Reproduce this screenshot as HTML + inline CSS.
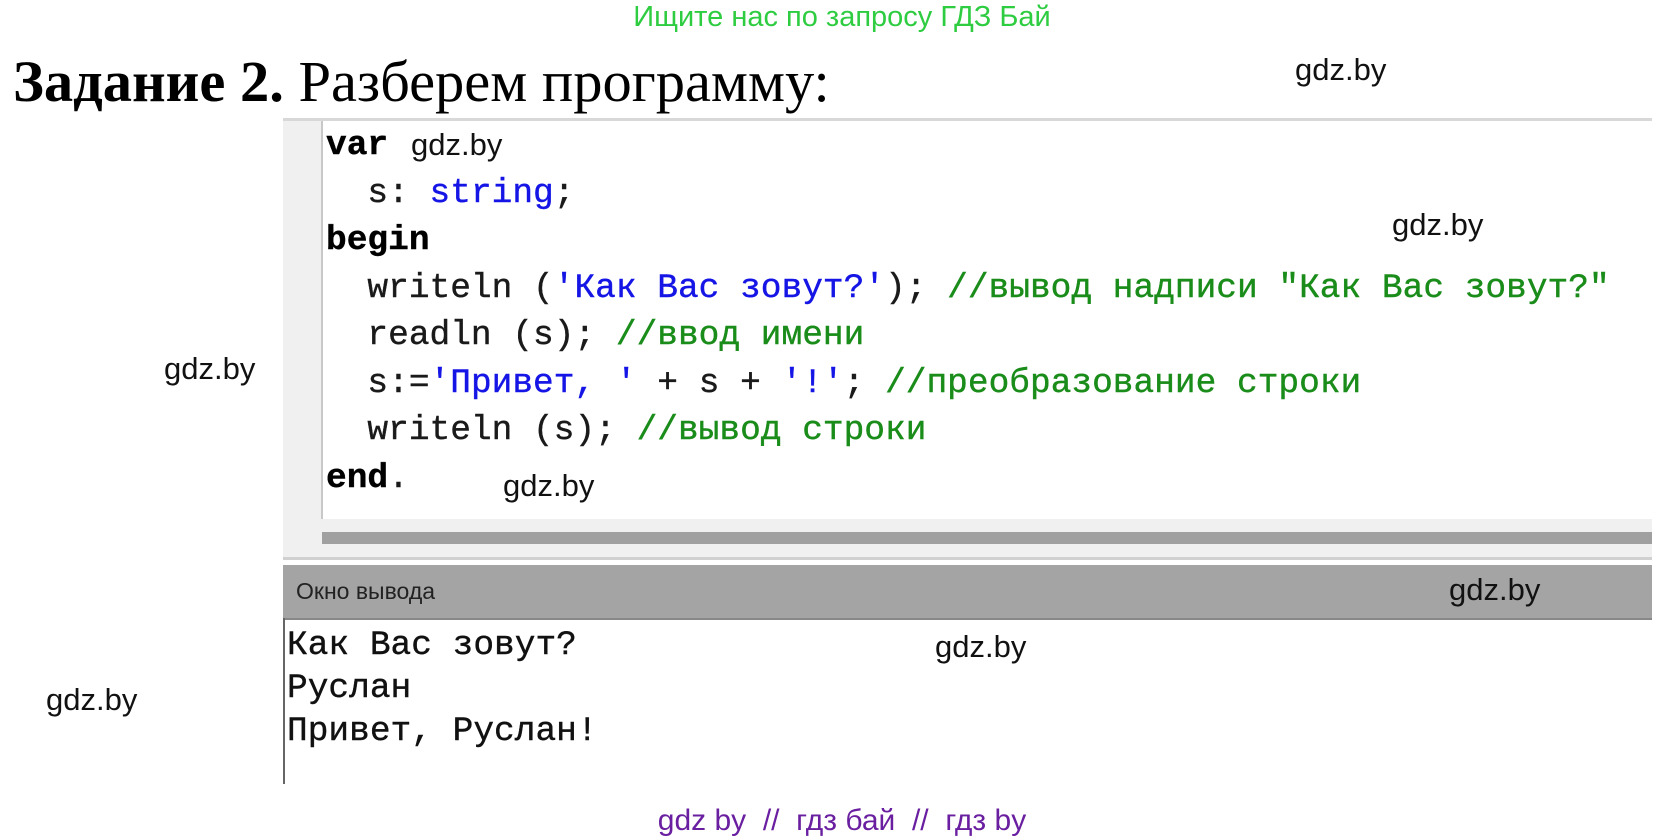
<!DOCTYPE html>
<html><head><meta charset="utf-8"><style>
body{margin:0;width:1667px;height:834px;background:#fff;position:relative;overflow:hidden;font-family:"Liberation Sans",sans-serif}
.a{position:absolute;white-space:pre}
.w{position:absolute;font-size:31px;line-height:34px;color:#111;font-family:"Liberation Sans",sans-serif}
.code{position:absolute;left:326px;top:122px;font-family:"Liberation Mono",monospace;font-size:34.5px;line-height:47.5px;color:#1a1a1a;white-space:pre;-webkit-text-stroke:0.4px currentColor}
.k{font-weight:bold;color:#000}.s{color:#1515e6}.c{color:#1a8c1a}
.out{position:absolute;left:287px;top:624px;font-family:"Liberation Mono",monospace;font-size:34.5px;line-height:43px;color:#111;white-space:pre;-webkit-text-stroke:0.4px currentColor}
</style></head><body>
<div class="a" style="left:0;width:1684px;text-align:center;top:0px;font-size:29px;line-height:34px;color:#2ecc40">Ищите нас по запросу ГДЗ Бай</div>
<div class="a" style="left:13px;top:53px;font-family:'Liberation Serif',serif;font-size:58.5px;line-height:58px;color:#000"><b>Задание 2.</b> Разберем программу:</div>

<div style="position:absolute;left:283px;top:118px;width:1369px;height:3px;background:#d8d8d8"></div>
<div style="position:absolute;left:283px;top:121px;width:38px;height:398px;background:#f0f0f0"></div>
<div style="position:absolute;left:321px;top:121px;width:2px;height:398px;background:#c8c8c8"></div>
<div class="code"><span class="k">var</span>
  s: <span class="s">string</span>;
<span class="k">begin</span>
  writeln (<span class="s">'Как Вас зовут?'</span>); <span class="c">//вывод надписи "Как Вас зовут?"</span>
  readln (s); <span class="c">//ввод имени</span>
  s:=<span class="s">'Привет, '</span> + s + <span class="s">'!'</span>; <span class="c">//преобразование строки</span>
  writeln (s); <span class="c">//вывод строки</span>
<span class="k">end</span>.</div>

<div style="position:absolute;left:283px;top:519px;width:1369px;height:38px;background:#f0f0f0"></div>
<div style="position:absolute;left:322px;top:532px;width:1330px;height:12px;background:#a0a0a0"></div>
<div style="position:absolute;left:283px;top:557px;width:1369px;height:3px;background:#d0d0d0"></div>
<div style="position:absolute;left:283px;top:565px;width:1369px;height:53px;background:#a4a4a4"></div>
<div class="a" style="left:296px;top:577px;font-size:23px;line-height:28px;color:#222">Окно вывода</div>
<div style="position:absolute;left:283px;top:618px;width:1369px;height:2px;background:#888"></div>
<div style="position:absolute;left:283px;top:618px;width:2px;height:166px;background:#666"></div>
<div class="out">Как Вас зовут?
Руслан
Привет, Руслан!</div>

<div class="w" style="left:1295px;top:53px">gdz.by</div>
<div class="w" style="left:411px;top:128px">gdz.by</div>
<div class="w" style="left:1392px;top:208px">gdz.by</div>
<div class="w" style="left:164px;top:352px">gdz.by</div>
<div class="w" style="left:503px;top:469px">gdz.by</div>
<div class="w" style="left:1449px;top:573px">gdz.by</div>
<div class="w" style="left:935px;top:630px">gdz.by</div>
<div class="w" style="left:46px;top:683px">gdz.by</div>
<div class="a" style="left:0;width:1684px;text-align:center;top:804px;font-size:30px;line-height:34px;color:#6a1fa0">gdz by  //  гдз бай  //  гдз by</div>
</body></html>
